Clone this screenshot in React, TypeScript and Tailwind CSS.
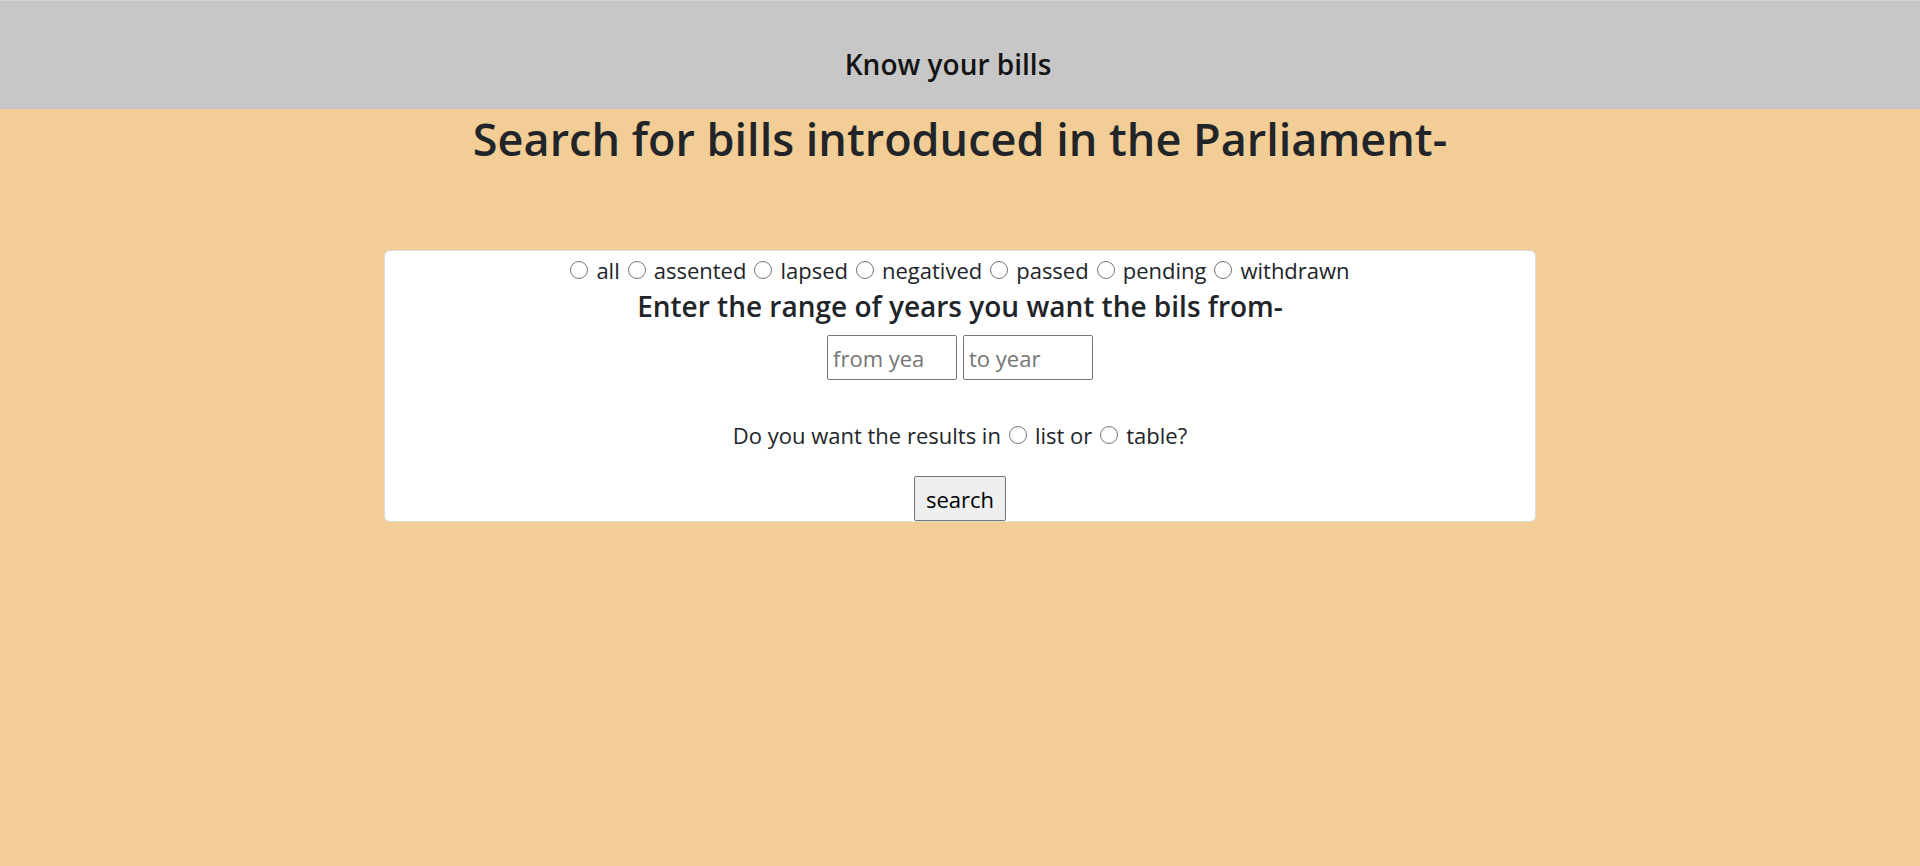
const statuses = ['all', 'assented', 'lapsed', 'negatived', 'passed', 'pending', 'withdrawn'];

const radio =
  'size-[18px] shrink-0 appearance-none rounded-full border border-[#767676] bg-white checked:border-[5px] checked:border-[#0075ff]';
const yearBox =
  'h-[45px] w-[130px] rounded-[2px] border border-[#767676] bg-white pl-[5px] pr-8 text-[22px] text-black placeholder:text-[#757575]';

export default function App() {
  return (
    <div className="min-h-screen bg-[#f2ce96] font-['Open_Sans','Noto_Sans',sans-serif] text-[22px] text-[#212529]">
      <header className="border-t border-[#d5d6da] bg-[#c7c7c7] pt-[45px] pr-6 pb-[27px] text-center text-[#141414]">
        <h3 className="text-[28px] leading-9 font-semibold">Know your bills</h3>
      </header>

      <main>
        <h1 className="pt-px text-center text-[45px] leading-[58px] font-semibold">
          Search for bills introduced in the Parliament-
        </h1>

        <form
          className="mx-auto mt-[82px] w-3/5 rounded-md border border-[#dcdcdf] bg-white"
          onSubmit={(e) => e.preventDefault()}
        >
          <fieldset className="flex flex-wrap justify-center gap-x-2 pt-px leading-9">
            {statuses.map((s) => (
              <label key={s} className="flex items-center gap-2">
                <input type="radio" name="status" value={s} className={radio} />
                {s}
              </label>
            ))}
          </fieldset>

          <h4 className="text-center text-[28px] leading-9 font-semibold">
            Enter the range of years you want the bils from-
          </h4>

          <div className="mt-[11px] flex justify-center gap-[6px]">
            <input type="text" aria-label="From year" placeholder="from year" className={yearBox} />
            <input type="text" aria-label="To year" placeholder="to year" className={yearBox} />
          </div>

          <fieldset className="mt-[37px] flex flex-wrap justify-center gap-x-2 leading-9">
            <span>Do you want the results in</span>
            <label className="flex items-center gap-2">
              <input type="radio" name="view" value="list" className={radio} />
              list or
            </label>
            <label className="flex items-center gap-2">
              <input type="radio" name="view" value="table" className={radio} />
              table?
            </label>
          </fieldset>

          <div className="mt-[23px] flex justify-center">
            <button
              type="submit"
              className="h-[45px] w-[92px] rounded-[2px] border border-[#767676] bg-[#efefef] pt-px text-[22px] text-black"
            >
              search
            </button>
          </div>
        </form>
      </main>
    </div>
  );
}
